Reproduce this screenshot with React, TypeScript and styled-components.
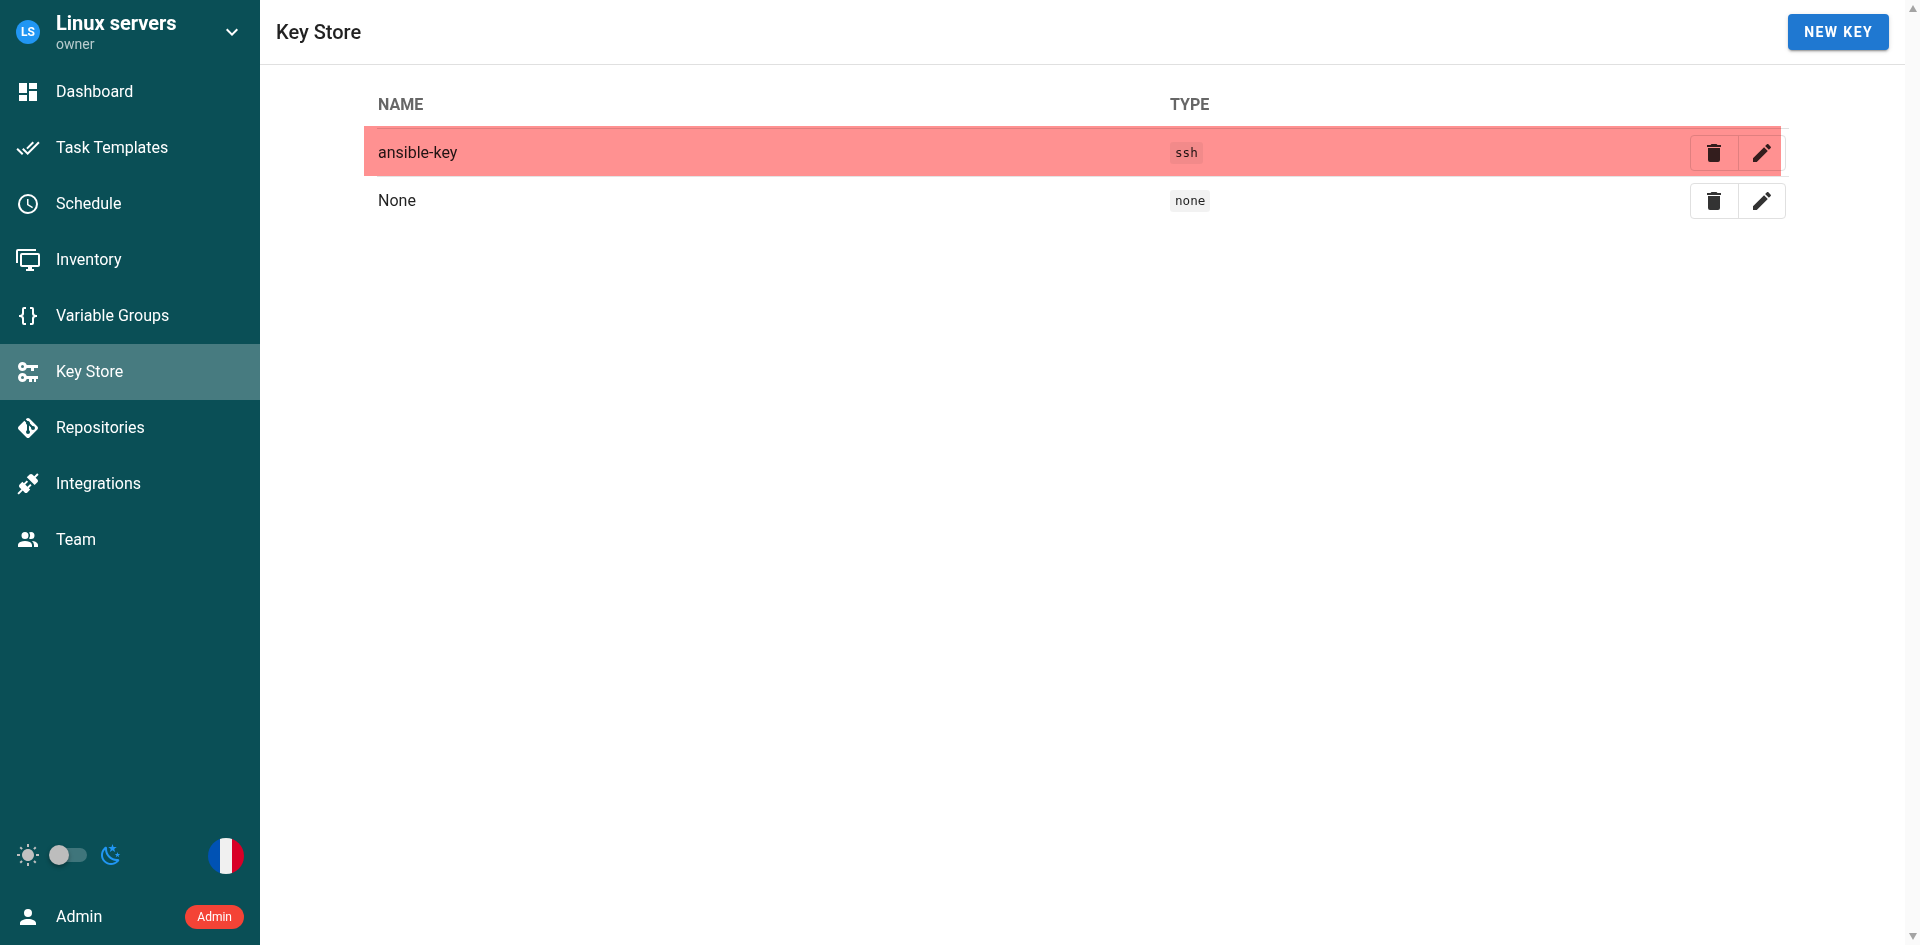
import styled, { createGlobalStyle } from 'styled-components';

const GlobalStyle = createGlobalStyle`
  html, body {
    margin: 0;
    padding: 0;
    height: 100%;
    overflow: hidden;
  }
  body {
    font-family: Roboto, "Liberation Sans", sans-serif;
    color: rgba(0, 0, 0, 0.87);
    background: #fff;
  }
`;

const paths = {
  dashboard: 'M13,3V9H21V3M13,21H21V11H13M3,21H11V15H3M3,13H11V3H3V13Z',
  checkAll:
    'M0.41,13.41L6,19L7.41,17.58L1.83,12M22.24,5.58L11.66,16.17L7.5,12L6.07,13.41L11.66,19L23.66,7M18,7L16.59,5.58L10.24,11.93L11.66,13.34L18,7Z',
  clock:
    'M12,20A8,8 0 0,0 20,12A8,8 0 0,0 12,4A8,8 0 0,0 4,12A8,8 0 0,0 12,20M12,2A10,10 0 0,1 22,12A10,10 0 0,1 12,22C6.47,22 2,17.5 2,12A10,10 0 0,1 12,2M12.5,7V12.25L17,14.92L16.25,16.15L11,13V7H12.5Z',
  monitor:
    'M22,17V7H6V17H22M22,5A2,2 0 0,1 24,7V17C24,18.11 23.1,19 22,19H16V21H18V23H10V21H12V19H6C4.89,19 4,18.1 4,17V7A2,2 0 0,1 6,5H22M2,3V15H0V3A2,2 0 0,1 2,1H20V3H2Z',
  braces:
    'M8,3A2,2 0 0,0 6,5V9A2,2 0 0,1 4,11H3V13H4A2,2 0 0,1 6,15V19A2,2 0 0,0 8,21H10V19H8V14A2,2 0 0,0 6,12A2,2 0 0,0 8,10V5H10V3M16,3A2,2 0 0,1 18,5V9A2,2 0 0,0 20,11H21V13H20A2,2 0 0,0 18,15V19A2,2 0 0,1 16,21H14V19H16V14A2,2 0 0,1 18,12A2,2 0 0,1 16,10V5H14V3H16Z',
  keys:
    'M6.5,2C8.46,2 10.13,3.25 10.74,5H22V8H18V11H15V8H10.74C10.13,9.75 8.46,11 6.5,11C4,11 2,9 2,6.5C2,4 4,2 6.5,2M6.5,5A1.5,1.5 0 0,0 5,6.5A1.5,1.5 0 0,0 6.5,8A1.5,1.5 0 0,0 8,6.5A1.5,1.5 0 0,0 6.5,5M6.5,13C8.46,13 10.13,14.25 10.74,16H22V19H20V22H18V19H16V22H13V19H10.74C10.13,20.75 8.46,22 6.5,22C4,22 2,20 2,17.5C2,15 4,13 6.5,13M6.5,16A1.5,1.5 0 0,0 5,17.5A1.5,1.5 0 0,0 6.5,19A1.5,1.5 0 0,0 8,17.5A1.5,1.5 0 0,0 6.5,16Z',
  git:
    'M2.6,10.59L8.38,4.8L10.07,6.5C9.83,7.35 10.22,8.28 11,8.73V14.27C10.4,14.61 10,15.26 10,16A2,2 0 0,0 12,18A2,2 0 0,0 14,16C14,15.26 13.6,14.61 13,14.27V9.41L15.07,11.5C15,11.65 15,11.82 15,12A2,2 0 0,0 17,14A2,2 0 0,0 19,12A2,2 0 0,0 17,10C16.82,10 16.65,10 16.5,10.07L13.93,7.5C14.19,6.57 13.71,5.55 12.78,5.16C12.35,5 11.9,4.96 11.5,5.07L9.8,3.38L10.59,2.6C11.37,1.81 12.63,1.81 13.41,2.6L21.4,10.59C22.19,11.37 22.19,12.63 21.4,13.41L13.41,21.4C12.63,22.19 11.37,22.19 10.59,21.4L2.6,13.41C1.81,12.63 1.81,11.37 2.6,10.59Z',
  connection:
    'M21.4 7.5C22.2 8.3 22.2 9.6 21.4 10.3L18.6 13.1L10.8 5.3L13.6 2.5C14.4 1.7 15.7 1.7 16.4 2.5L18.2 4.3L21.2 1.3L22.6 2.7L19.6 5.7L21.4 7.5M15.6 13.3L14.2 11.9L11.4 14.7L9.3 12.6L12.1 9.8L10.7 8.4L7.9 11.2L6.4 9.8L3.6 12.6C2.8 13.4 2.8 14.7 3.6 15.4L5.4 17.2L1.4 21.2L2.8 22.6L6.8 18.6L8.6 20.4C9.4 21.2 10.7 21.2 11.4 20.4L14.2 17.6L12.8 16.2L15.6 13.3Z',
  team:
    'M16 17V19H2V17S2 13 9 13 16 17 16 17M12.5 7.5A3.5 3.5 0 1 0 9 11A3.5 3.5 0 0 0 12.5 7.5M15.94 13A5.32 5.32 0 0 1 18 17V19H22V17S22 13.37 15.94 13M15 4A3.39 3.39 0 0 0 13.07 4.59A5 5 0 0 1 13.07 10.41A3.39 3.39 0 0 0 15 11A3.5 3.5 0 0 0 15 4Z',
  account:
    'M12,4A4,4 0 0,1 16,8A4,4 0 0,1 12,12A4,4 0 0,1 8,8A4,4 0 0,1 12,4M12,14C16.42,14 20,15.79 20,18V20H4V18C4,15.79 7.58,14 12,14Z',
  chevronDown: 'M7.41,8.58L12,13.17L16.59,8.58L18,10L12,16L6,10L7.41,8.58Z',
  trash: 'M19,4H15.5L14.5,3H9.5L8.5,4H5V6H19M6,19A2,2 0 0,0 8,21H16A2,2 0 0,0 18,19V7H6V19Z',
  pencil:
    'M20.71,7.04C21.1,6.65 21.1,6 20.71,5.63L18.37,3.29C18,2.9 17.35,2.9 16.96,3.29L15.12,5.12L18.87,8.87M3,17.25V21H6.75L17.81,9.93L14.06,6.18L3,17.25Z',
  sun:
    'M3.55 19.09L4.96 20.5L6.76 18.71L5.34 17.29M12 6C8.69 6 6 8.69 6 12S8.69 18 12 18 18 15.31 18 12C18 8.68 15.31 6 12 6M20 13H23V11H20M17.24 18.71L19.04 20.5L20.45 19.09L18.66 17.29M20.45 5L19.04 3.6L17.24 5.39L18.66 6.81M13 1H11V4H13M6.76 5.39L4.96 3.6L3.55 5L5.34 6.79L6.76 5.39M1 13H4V11H1M13 20H11V23H13',
  moon:
    'M17.75,4.09L15.22,6.03L16.13,9.09L13.5,7.28L10.87,9.09L11.78,6.03L9.25,4.09L12.44,4L13.5,1L14.56,4L17.75,4.09M21.25,11L19.61,12.25L20.2,14.23L18.5,13.06L16.8,14.23L17.39,12.25L15.75,11L17.81,10.95L18.5,9L19.19,10.95L21.25,11M18.97,15.95C19.8,15.87 20.69,17.05 20.16,17.8C19.84,18.25 19.5,18.67 19.08,19.07C15.17,23 8.84,23 4.94,19.07C1.03,15.17 1.03,8.83 4.94,4.93C5.34,4.53 5.76,4.17 6.21,3.85C6.96,3.32 8.14,4.21 8.06,5.04C7.79,7.9 8.75,10.87 10.95,13.06C13.14,15.26 16.1,16.22 18.97,15.95M17.33,17.97C14.5,17.81 11.7,16.64 9.53,14.5C7.36,12.31 6.2,9.5 6.04,6.68C3.23,9.82 3.34,14.64 6.35,17.66C9.37,20.67 14.19,20.78 17.33,17.97Z',
};

const Icon = ({ d, className }: { d: string; className?: string }) => (
  <svg className={className} viewBox="0 0 24 24" width="24" height="24" fill="currentColor">
    <path d={d} />
  </svg>
);

const Page = styled.div`
  display: flex;
  width: 1920px;
  height: 945px;
  overflow: hidden;
`;

const Sidebar = styled.aside`
  width: 260px;
  flex-shrink: 0;
  display: flex;
  flex-direction: column;
  background: #0a4f56;
  color: #fff;
`;

const Project = styled.div`
  height: 64px;
  flex-shrink: 0;
  display: flex;
  align-items: center;
  padding: 0 16px;
`;

const Avatar = styled.div`
  width: 24px;
  height: 24px;
  border-radius: 50%;
  margin-right: 16px;
  background: #2196f3;
  display: flex;
  align-items: center;
  justify-content: center;
  font-size: 12px;
  font-weight: 700;
`;

const ProjectText = styled.div`
  flex: 1;
  display: flex;
  flex-direction: column;
`;

const ProjectName = styled.div`
  font-size: 20px;
  line-height: 24px;
  font-weight: 700;
`;

const ProjectRole = styled.div`
  font-size: 14px;
  line-height: 18px;
  opacity: 0.7;
`;

const NavList = styled.nav`
  display: flex;
  flex-direction: column;
`;

const NavItem = styled.div<{ $active?: boolean }>`
  height: 56px;
  display: flex;
  align-items: center;
  padding: 0 16px;
  font-size: 16px;
  line-height: 20px;
  background: ${(p) => (p.$active ? 'rgba(255, 255, 255, 0.25)' : 'transparent')};
  svg {
    margin-right: 16px;
  }
`;

const Spacer = styled.div`
  flex: 1;
`;

const ThemeRow = styled.div`
  display: flex;
  align-items: center;
  padding: 0 16px;
  height: 60px;
  margin-bottom: 3px;
`;

const ThemeToggle = styled.div`
  display: flex;
  align-items: center;
  margin-top: -2px;
`;

const SunIcon = styled(Icon)`
  color: #c0c0c0;
`;

const MoonIcon = styled(Icon)`
  color: #2196f3;
  margin-left: 12px;
`;

const Switch = styled.div`
  position: relative;
  width: 36px;
  height: 14px;
  margin-left: 11px;
  border-radius: 7px;
  background: rgba(255, 255, 255, 0.22);
`;

const SwitchThumb = styled.div`
  position: absolute;
  left: -2px;
  top: -3px;
  width: 20px;
  height: 20px;
  border-radius: 50%;
  background: #bdbdbd;
  box-shadow: 0 2px 4px rgba(0, 0, 0, 0.35);
`;

const Flag = styled.svg`
  margin-left: auto;
  display: block;
`;

const UserRow = styled.div`
  display: flex;
  align-items: center;
  height: 56px;
  padding: 0 16px;
  font-size: 16px;
  line-height: 20px;
  svg {
    margin-right: 16px;
  }
`;

const RoleChip = styled.span`
  margin-left: auto;
  height: 24px;
  padding: 0 12px;
  border-radius: 12px;
  background: #f44336;
  font-size: 12px;
  line-height: 24px;
`;

const Main = styled.main`
  flex: 1;
  min-width: 0;
`;

const TopBar = styled.header`
  height: 64px;
  display: flex;
  align-items: center;
  justify-content: space-between;
  padding: 0 16px;
  border-bottom: 1px solid #e0e0e0;
`;

const Title = styled.h1`
  margin: 0;
  font-size: 20px;
  font-weight: 500;
`;

const NewKeyButton = styled.button`
  height: 36px;
  padding: 0 16px;
  border: 0;
  border-radius: 4px;
  background: #1f78d1;
  color: #fff;
  font-family: inherit;
  font-size: 14px;
  font-weight: 700;
  letter-spacing: 1.4px;
  text-transform: uppercase;
  box-shadow: 0 3px 1px -2px rgba(0, 0, 0, 0.2), 0 2px 2px 0 rgba(0, 0, 0, 0.14), 0 1px 5px 0 rgba(0, 0, 0, 0.12);
`;

const TableWrap = styled.div`
  position: relative;
  width: 1412px;
  margin: 16px 0 0 117px;
`;

const Row = styled.div<{ $head?: boolean }>`
  display: grid;
  grid-template-columns: 792px 1fr auto;
  align-items: center;
  height: 48px;
  padding: 0 3px 0 1px;
  box-sizing: border-box;
  font-size: 16px;
  line-height: 20px;
  border-bottom: 1px solid ${(p) => (p.$head ? '#e0e0e0' : '#e4e4e4')};
  &:last-child {
    border-bottom: 0;
  }
`;

const HeadCell = styled.div`
  font-size: 16px;
  font-weight: 700;
  color: #666;
`;

const Code = styled.code`
  justify-self: start;
  font-family: "DejaVu Sans Mono", monospace;
  font-size: 12.6px;
  line-height: 16px;
  padding: 3px 5px;
  border-radius: 3px;
  background: rgba(0, 0, 0, 0.05);
`;

const ActionGroup = styled.div`
  display: flex;
  width: 96px;
  height: 36px;
  border: 1px solid #e0e0e0;
  border-radius: 4px;
  box-sizing: border-box;
`;

const ActionButton = styled.div`
  flex: 1;
  display: flex;
  align-items: center;
  justify-content: center;
  color: #333;
  & + & {
    border-left: 1px solid #e0e0e0;
  }
`;

const RedOverlay = styled.div`
  position: absolute;
  left: -13px;
  top: 45px;
  width: 1417px;
  height: 50px;
  background: #ff9191;
  mix-blend-mode: multiply;
  pointer-events: none;
`;

const Scrollbar = styled.div`
  width: 15px;
  flex-shrink: 0;
  display: flex;
  flex-direction: column;
  justify-content: space-between;
  align-items: center;
  padding: 5px 0;
  box-sizing: border-box;
  background: #fafafa;
`;

const ScrollArrow = styled.div<{ $down?: boolean }>`
  width: 0;
  height: 0;
  border-left: 4.5px solid transparent;
  border-right: 4.5px solid transparent;
  ${(p) => (p.$down ? 'border-top: 7px solid #a3a3a3;' : 'border-bottom: 7px solid #a3a3a3;')}
`;

const navItems = [
  { label: 'Dashboard', icon: paths.dashboard },
  { label: 'Task Templates', icon: paths.checkAll },
  { label: 'Schedule', icon: paths.clock },
  { label: 'Inventory', icon: paths.monitor },
  { label: 'Variable Groups', icon: paths.braces },
  { label: 'Key Store', icon: paths.keys, active: true },
  { label: 'Repositories', icon: paths.git },
  { label: 'Integrations', icon: paths.connection },
  { label: 'Team', icon: paths.team },
];

const keys = [
  { name: 'ansible-key', type: 'ssh' },
  { name: 'None', type: 'none' },
];

const App = () => {
  return (
    <Page>
      <GlobalStyle />
      <Sidebar>
        <Project>
          <Avatar>LS</Avatar>
          <ProjectText>
            <ProjectName>Linux servers</ProjectName>
            <ProjectRole>owner</ProjectRole>
          </ProjectText>
          <Icon d={paths.chevronDown} />
        </Project>
        <NavList>
          {navItems.map((item) => (
            <NavItem key={item.label} $active={item.active}>
              <Icon d={item.icon} />
              {item.label}
            </NavItem>
          ))}
        </NavList>
        <Spacer />
        <ThemeRow>
          <ThemeToggle>
            <SunIcon d={paths.sun} />
            <Switch>
              <SwitchThumb />
            </Switch>
            <MoonIcon d={paths.moon} />
          </ThemeToggle>
          <Flag width="36" height="36" viewBox="0 0 36 36">
            <clipPath id="flag-clip">
              <circle cx="18" cy="18" r="18" />
            </clipPath>
            <g clipPath="url(#flag-clip)">
              <rect x="0" y="0" width="12" height="36" fill="#0052b4" />
              <rect x="12" y="0" width="12" height="36" fill="#f0f0f0" />
              <rect x="24" y="0" width="12" height="36" fill="#d80027" />
            </g>
          </Flag>
        </ThemeRow>
        <UserRow>
          <Icon d={paths.account} />
          Admin
          <RoleChip>Admin</RoleChip>
        </UserRow>
      </Sidebar>
      <Main>
        <TopBar>
          <Title>Key Store</Title>
          <NewKeyButton>New Key</NewKeyButton>
        </TopBar>
        <TableWrap>
          <RedOverlay />
          <Row $head>
            <HeadCell>NAME</HeadCell>
            <HeadCell>TYPE</HeadCell>
          </Row>
          {keys.map((k) => (
            <Row key={k.name}>
              <div>{k.name}</div>
              <Code>{k.type}</Code>
              <ActionGroup>
                <ActionButton>
                  <Icon d={paths.trash} />
                </ActionButton>
                <ActionButton>
                  <Icon d={paths.pencil} />
                </ActionButton>
              </ActionGroup>
            </Row>
          ))}
        </TableWrap>
      </Main>
      <Scrollbar>
        <ScrollArrow />
        <ScrollArrow $down />
      </Scrollbar>
    </Page>
  );
};

export default App;
